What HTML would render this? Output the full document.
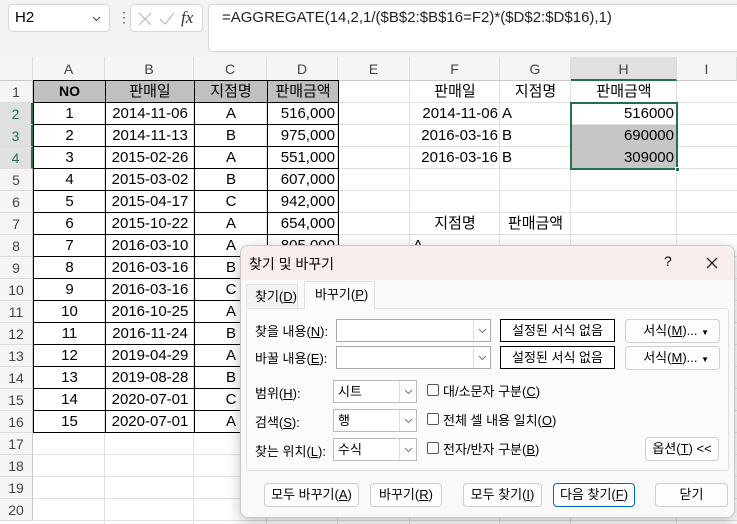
<!DOCTYPE html>
<html><head><meta charset="utf-8"><style>
*{box-sizing:border-box;margin:0;padding:0}
body{width:737px;height:524px;overflow:hidden;background:#fff;position:relative;font-family:"Liberation Sans","Noto Sans CJK KR",sans-serif;color:#000}
.a{position:absolute}
.top{left:0;top:0;width:737px;height:57px;background:#f3f3f3}
.box{background:#fff;border:1px solid #d6d6d6;border-radius:4px}
.colh{top:57px;height:24px;background:#f5f5f5;font-size:14px;color:#444;text-align:center;line-height:24px;border-right:1px solid #dcdcdc;border-bottom:1px solid #c8c8c8}
.rowh{left:0;width:33px;height:22px;background:#f5f5f5;font-size:14px;color:#444;text-align:center;line-height:22px;border-bottom:1px solid #dcdcdc;border-right:1px solid #c8c8c8}
.vl{top:81px;width:1px;height:443px;background:#e1e1e1}
table{position:absolute;left:33px;top:80px;border-collapse:collapse;font-size:15px}
td{border:1px solid #000;height:22px;padding:0 3px;line-height:20px;text-align:center}
td.r{text-align:right}
tr.h td{background:#c0c0c0}
.c{font-size:15px;line-height:22px;height:22px}
.dlg{left:240px;top:245px;width:495px;height:273px;background:#f9f9f9;border:1px solid #c9c9c9;border-radius:8px;box-shadow:0 4px 14px rgba(0,0,0,.25);overflow:hidden;font-size:13px}
.btn{position:absolute;background:#fdfdfd;border:1px solid #cfcfcf;border-radius:4px;text-align:center;font-size:13px;line-height:22px;height:24px;white-space:nowrap}
.inp{position:absolute;background:#fff;border:1px solid #a8a8a8;height:23px}
.dd{position:absolute;right:0;top:0;width:17px;height:21px;border-left:1px solid #ddd}
.dd svg{position:absolute;left:4px;top:8px}
.lbl{position:absolute;font-size:13px;white-space:nowrap}
.cb{position:absolute;width:12px;height:12px;border:1px solid #555;border-radius:2px;background:#fff}
u{text-decoration:underline}
</style></head><body>
<div class="a top"></div>
<div class="a box" style="left:8px;top:4px;width:102px;height:28px;font-size:15px;line-height:26px;padding-left:6px">H2<svg class="a" style="right:8px;top:11px" width="9" height="6"><path d="M1 1l3.5 3.5L8 1" stroke="#444" fill="none"/></svg></div>
<div class="a" style="left:117px;top:9px;font-size:14px;color:#555">&#8942;</div>
<div class="a box" style="left:130px;top:4px;width:73px;height:28px">
<svg class="a" style="left:7px;top:7px" width="14" height="14"><path d="M1 1l12 12M13 1L1 13" stroke="#bbb" stroke-width="1.2"/></svg>
<svg class="a" style="left:28px;top:7px" width="16" height="14"><path d="M1 7l5 5L15 1" stroke="#bbb" stroke-width="1.2" fill="none"/></svg>
<i class="a" style="left:50px;top:3px;color:#333;font-family:'Liberation Serif',serif;font-size:17px">fx</i></div>
<div class="a box" style="left:208px;top:4px;width:540px;height:48px;font-size:15px;padding:4px 0 0 13px;color:#222">=AGGREGATE(14,2,1/($B$2:$B$16=F2)*($D$2:$D$16),1)</div>

<div class="a colh" style="left:0;width:33px"></div>
<div class="a colh" style="left:33px;width:72px">A</div>
<div class="a colh" style="left:105px;width:89px">B</div>
<div class="a colh" style="left:194px;width:73px">C</div>
<div class="a colh" style="left:267px;width:71px">D</div>
<div class="a colh" style="left:338px;width:72px">E</div>
<div class="a colh" style="left:410px;width:90px">F</div>
<div class="a colh" style="left:500px;width:71px">G</div>
<div class="a colh" style="left:571px;width:106px;background:#e0e0e0;border-bottom:2px solid #217346">H</div>
<div class="a colh" style="left:677px;width:60px">I</div>

<div class="a" style="left:33px;top:81px;width:704px;height:443px;background:repeating-linear-gradient(to bottom,transparent 0,transparent 21px,#e1e1e1 21px,#e1e1e1 22px)"></div>
<div class="a vl" style="left:104px"></div><div class="a vl" style="left:193px"></div><div class="a vl" style="left:266px"></div><div class="a vl" style="left:337px"></div><div class="a vl" style="left:409px"></div><div class="a vl" style="left:499px"></div><div class="a vl" style="left:570px"></div><div class="a vl" style="left:676px"></div>

<div class="a rowh" style="top:81px">1</div>
<div class="a rowh" style="top:103px;background:#e0e0e0;color:#217346;border-right:2px solid #217346">2</div>
<div class="a rowh" style="top:125px;background:#e0e0e0;color:#217346;border-right:2px solid #217346">3</div>
<div class="a rowh" style="top:147px;background:#e0e0e0;color:#217346;border-right:2px solid #217346">4</div>
<div class="a rowh" style="top:169px">5</div><div class="a rowh" style="top:191px">6</div><div class="a rowh" style="top:213px">7</div><div class="a rowh" style="top:235px">8</div><div class="a rowh" style="top:257px">9</div><div class="a rowh" style="top:279px">10</div><div class="a rowh" style="top:301px">11</div><div class="a rowh" style="top:323px">12</div><div class="a rowh" style="top:345px">13</div><div class="a rowh" style="top:367px">14</div><div class="a rowh" style="top:389px">15</div><div class="a rowh" style="top:411px">16</div><div class="a rowh" style="top:433px">17</div><div class="a rowh" style="top:455px">18</div><div class="a rowh" style="top:477px">19</div><div class="a rowh" style="top:499px">20</div>

<table>
<colgroup><col style="width:72px"><col style="width:89px"><col style="width:73px"><col style="width:71px"></colgroup>
<tr class="h"><td><b style="font-size:14px">NO</b></td><td>판매일</td><td>지점명</td><td>판매금액</td></tr>
<tr><td>1</td><td>2014-11-06</td><td>A</td><td class="r">516,000</td></tr>
<tr><td>2</td><td>2014-11-13</td><td>B</td><td class="r">975,000</td></tr>
<tr><td>3</td><td>2015-02-26</td><td>A</td><td class="r">551,000</td></tr>
<tr><td>4</td><td>2015-03-02</td><td>B</td><td class="r">607,000</td></tr>
<tr><td>5</td><td>2015-04-17</td><td>C</td><td class="r">942,000</td></tr>
<tr><td>6</td><td>2015-10-22</td><td>A</td><td class="r">654,000</td></tr>
<tr><td>7</td><td>2016-03-10</td><td>A</td><td class="r">805,000</td></tr>
<tr><td>8</td><td>2016-03-16</td><td>B</td><td class="r">690,000</td></tr>
<tr><td>9</td><td>2016-03-16</td><td>C</td><td class="r">752,000</td></tr>
<tr><td>10</td><td>2016-10-25</td><td>A</td><td class="r">412,000</td></tr>
<tr><td>11</td><td>2016-11-24</td><td>B</td><td class="r">309,000</td></tr>
<tr><td>12</td><td>2019-04-29</td><td>A</td><td class="r">870,000</td></tr>
<tr><td>13</td><td>2019-08-28</td><td>B</td><td class="r">560,000</td></tr>
<tr><td>14</td><td>2020-07-01</td><td>C</td><td class="r">720,000</td></tr>
<tr><td>15</td><td>2020-07-01</td><td>A</td><td class="r">480,000</td></tr>
</table>

<div class="a" style="left:572px;top:125px;width:104px;height:44px;background:#c6c6c6"></div>
<div class="a c" style="left:410px;top:81px;width:90px;text-align:center">판매일</div>
<div class="a c" style="left:500px;top:81px;width:71px;text-align:center">지점명</div>
<div class="a c" style="left:571px;top:81px;width:106px;text-align:center">판매금액</div>
<div class="a c" style="left:410px;top:103px;width:88px;text-align:right">2014-11-06</div>
<div class="a c" style="left:410px;top:125px;width:88px;text-align:right">2016-03-16</div>
<div class="a c" style="left:410px;top:147px;width:88px;text-align:right">2016-03-16</div>
<div class="a c" style="left:502px;top:103px">A</div>
<div class="a c" style="left:502px;top:125px">B</div>
<div class="a c" style="left:502px;top:147px">B</div>
<div class="a c" style="left:571px;top:103px;width:103px;text-align:right">516000</div>
<div class="a c" style="left:571px;top:125px;width:103px;text-align:right">690000</div>
<div class="a c" style="left:571px;top:147px;width:103px;text-align:right">309000</div>
<div class="a" style="left:570px;top:102px;width:108px;height:68px;border:2px solid #217346"></div>
<div class="a" style="left:675px;top:167px;width:5px;height:5px;background:#217346;border:1px solid #fff"></div>
<div class="a c" style="left:410px;top:213px;width:90px;text-align:center">지점명</div>
<div class="a c" style="left:500px;top:213px;width:71px;text-align:center">판매금액</div>
<div class="a c" style="left:413px;top:235px">A</div>

<div class="a dlg">
 <div class="a" style="left:0;top:0;width:495px;height:34px;background:#f8eeeb"></div>
 <div class="lbl" style="left:8px;top:8px;font-size:14px">찾기 및 바꾸기</div>
 <div class="lbl" style="left:423px;top:7px;font-size:14px">?</div>
 <svg class="a" style="left:465px;top:11px" width="12" height="12"><path d="M1 1l10 10M11 1L1 11" stroke="#222" stroke-width="1.3"/></svg>
 <div class="a" style="left:5px;top:62px;width:483px;height:163px;background:#fbfbfb;border:1px solid #e0e0e0;border-radius:3px"></div>
 <div class="a" style="left:5px;top:38px;width:52px;height:24px;background:#f3f3f3;border:1px solid #e0e0e0;border-bottom:none;font-size:13px;line-height:24px;padding-left:8px;white-space:nowrap">찾기(<u>D</u>)</div>
 <div class="a" style="left:63px;top:35px;width:71px;height:28px;background:#fbfbfb;border:1px solid #e0e0e0;border-bottom:none;font-size:13px;line-height:26px;padding-left:10px;white-space:nowrap">바꾸기(<u>P</u>)</div>
 <div class="lbl" style="left:14px;top:75px">찾을 내용(<u>N</u>):</div>
 <div class="inp" style="left:95px;top:73px;width:155px"><div class="dd"><svg width="9" height="6"><path d="M1 1l3.5 3.5L8 1" stroke="#777" fill="none"/></svg></div></div>
 <div class="a" style="left:259px;top:73px;width:115px;height:23px;border:1px solid #000;background:#fff;text-align:center;line-height:21px">설정된 서식 없음</div>
 <div class="btn" style="left:384px;top:73px;width:95px">&nbsp;&nbsp;서식(<u>M</u>)... <span style="font-size:8px">▼</span></div>
 <div class="lbl" style="left:14px;top:102px">바꿀 내용(<u>E</u>):</div>
 <div class="inp" style="left:95px;top:100px;width:155px"><div class="dd"><svg width="9" height="6"><path d="M1 1l3.5 3.5L8 1" stroke="#777" fill="none"/></svg></div></div>
 <div class="a" style="left:259px;top:100px;width:115px;height:23px;border:1px solid #000;background:#fff;text-align:center;line-height:21px">설정된 서식 없음</div>
 <div class="btn" style="left:384px;top:100px;width:95px">&nbsp;&nbsp;서식(<u>M</u>)... <span style="font-size:8px">▼</span></div>
 <div class="lbl" style="left:14px;top:137px">범위(<u>H</u>):</div>
 <div class="inp" style="left:92px;top:134px;width:84px;border-color:#bbb;padding-left:4px;line-height:21px">시트<div class="dd"><svg width="9" height="6"><path d="M1 1l3.5 3.5L8 1" stroke="#777" fill="none"/></svg></div></div>
 <div class="lbl" style="left:14px;top:166px">검색(<u>S</u>):</div>
 <div class="inp" style="left:92px;top:163px;width:84px;border-color:#bbb;padding-left:4px;line-height:21px">행<div class="dd"><svg width="9" height="6"><path d="M1 1l3.5 3.5L8 1" stroke="#777" fill="none"/></svg></div></div>
 <div class="lbl" style="left:14px;top:195px">찾는 위치(<u>L</u>):</div>
 <div class="inp" style="left:92px;top:192px;width:84px;border-color:#bbb;padding-left:4px;line-height:21px">수식<div class="dd"><svg width="9" height="6"><path d="M1 1l3.5 3.5L8 1" stroke="#777" fill="none"/></svg></div></div>
 <div class="cb" style="left:186px;top:138px"></div><div class="lbl" style="left:202px;top:135px">대/소문자 구분(<u>C</u>)</div>
 <div class="cb" style="left:186px;top:167px"></div><div class="lbl" style="left:202px;top:164px">전체 셀 내용 일치(<u>O</u>)</div>
 <div class="cb" style="left:186px;top:196px"></div><div class="lbl" style="left:202px;top:193px">전자/반자 구분(<u>B</u>)</div>
 <div class="btn" style="left:404px;top:191px;width:74px">옵션(<u>T</u>) &lt;&lt;</div>
 <div class="btn" style="left:23px;top:237px;width:95px">모두 바꾸기(<u>A</u>)</div>
 <div class="btn" style="left:129px;top:237px;width:72px">바꾸기(<u>R</u>)</div>
 <div class="btn" style="left:222px;top:237px;width:79px">모두 찾기(<u>I</u>)</div>
 <div class="btn" style="left:312px;top:237px;width:82px;border-color:#0067c0">다음 찾기(<u>F</u>)</div>
 <div class="btn" style="left:414px;top:237px;width:73px">닫기</div>
</div>
</body></html>
